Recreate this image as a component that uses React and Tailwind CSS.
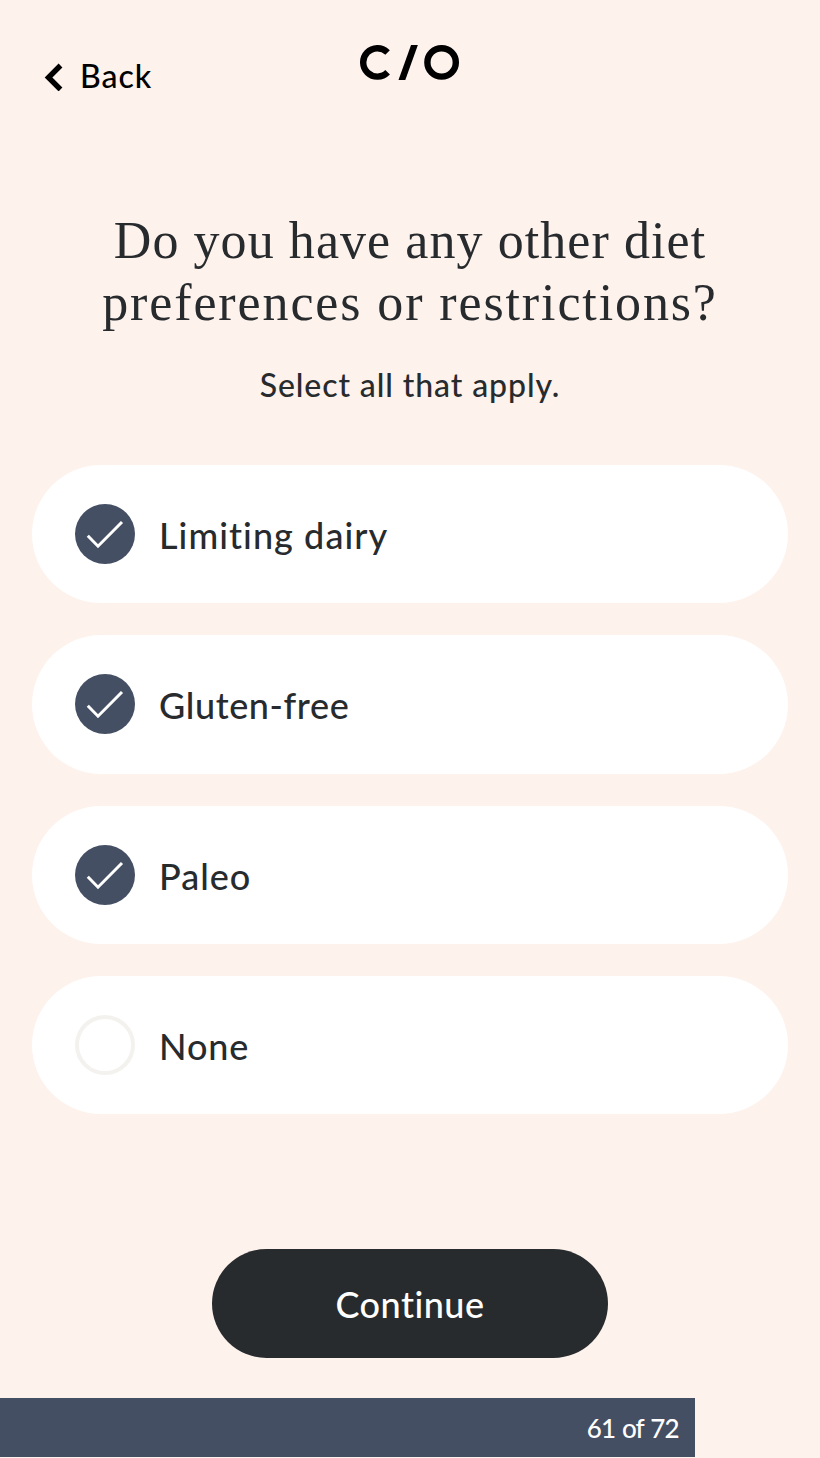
import React, { useState } from 'react';

const options = [
  { id: 'dairy', label: 'Limiting dairy', spacing: 'tracking-[1.05px]' },
  { id: 'gluten', label: 'Gluten-free', spacing: 'tracking-[0.6px]' },
  { id: 'paleo', label: 'Paleo', spacing: 'tracking-[1px]' },
  { id: 'none', label: 'None', spacing: 'tracking-[0.9px]' },
];

const Logo = () => (
  <svg width="100" height="35" viewBox="0 0 100 35" fill="none" stroke="#000" strokeWidth="6.4" role="img" aria-label="C/O">
    {/* open ring */}
    <circle cx="17.4" cy="17.4" r="14.2" pathLength="360" strokeDasharray="272 88" transform="rotate(44 17.4 17.4)" />
    <line x1="41" y1="37.5" x2="55" y2="-1.5" />
    <circle cx="81.6" cy="17.4" r="14.2" />
  </svg>
);

const CheckCircle = ({ checked }) => {
  if (!checked) {
    return <span className="h-[60px] w-[60px] shrink-0 rounded-full border-[4px] border-[#f4f2ef]" />;
  }
  return (
    <span className="h-[60px] w-[60px] shrink-0 rounded-full bg-[#454f64]">
      <svg width="60" height="60" viewBox="0 0 60 60" fill="none" stroke="#fff" strokeWidth="3">
        <path d="M12.8 31.8 L23 42.2 L47 18" />
      </svg>
    </span>
  );
};

const App = () => {
  const [selected, setSelected] = useState(['dairy', 'gluten', 'paleo']);

  const toggle = (id) => {
    setSelected(selected.includes(id) ? selected.filter((s) => s !== id) : [...selected, id]);
  };

  return (
    <div className="flex h-[1458px] w-[820px] flex-col overflow-hidden bg-[#fdf2ec] font-['Lato',sans-serif] font-medium text-[#282b2e]">
      <header className="grid h-[210px] shrink-0 grid-cols-3 items-start">
        <button className="ml-[44px] mt-[55px] flex h-[42px] items-center text-[32px] leading-[42px] text-black">
          <svg width="20" height="30" viewBox="0 0 20 30" fill="none" stroke="#000" strokeWidth="5.4">
            <path d="M16.5 4.5 L4.5 16.5 L16.5 28.5" />
          </svg>
          <span className="ml-[16px] tracking-[1px]">Back</span>
        </button>
        <div className="mt-[45px] flex justify-center">
          <Logo />
        </div>
      </header>

      <h1 className="flex shrink-0 flex-col items-center whitespace-nowrap font-['Liberation_Serif',serif] text-[52px] font-normal leading-[62px]">
        <span className="tracking-[1.07px]">Do you have any other diet</span>
        <span className="tracking-[1.88px]">preferences or restrictions?</span>
      </h1>
      <p className="mt-[30px] shrink-0 text-center text-[32px] leading-[42px] tracking-[0.9px]">Select all that apply.</p>

      <div className="mx-8 mt-[59px] flex flex-col gap-[32px]">
        {options.map((option) => (
          <button
            key={option.id}
            onClick={() => toggle(option.id)}
            className="flex h-[138.3px] items-center rounded-full bg-white pl-[43px] text-left"
          >
            <CheckCircle checked={selected.includes(option.id)} />
            <span className={`ml-[24px] pt-[2px] text-[36px] leading-[44px] ${option.spacing}`}>{option.label}</span>
          </button>
        ))}
      </div>

      <button className="mx-auto mt-[135px] h-[109px] w-[396px] shrink-0 rounded-full bg-[#282b2e] text-[36px] tracking-[0.5px] text-white">
        Continue
      </button>

      <div className="mt-auto mb-px flex h-[59px] w-[694.5px] shrink-0 items-center justify-end bg-[#454f64] pr-4 pt-px text-[26px] tracking-[-1px] text-white [word-spacing:1.5px]">
        61 of 72
      </div>
    </div>
  );
};

export default App;
